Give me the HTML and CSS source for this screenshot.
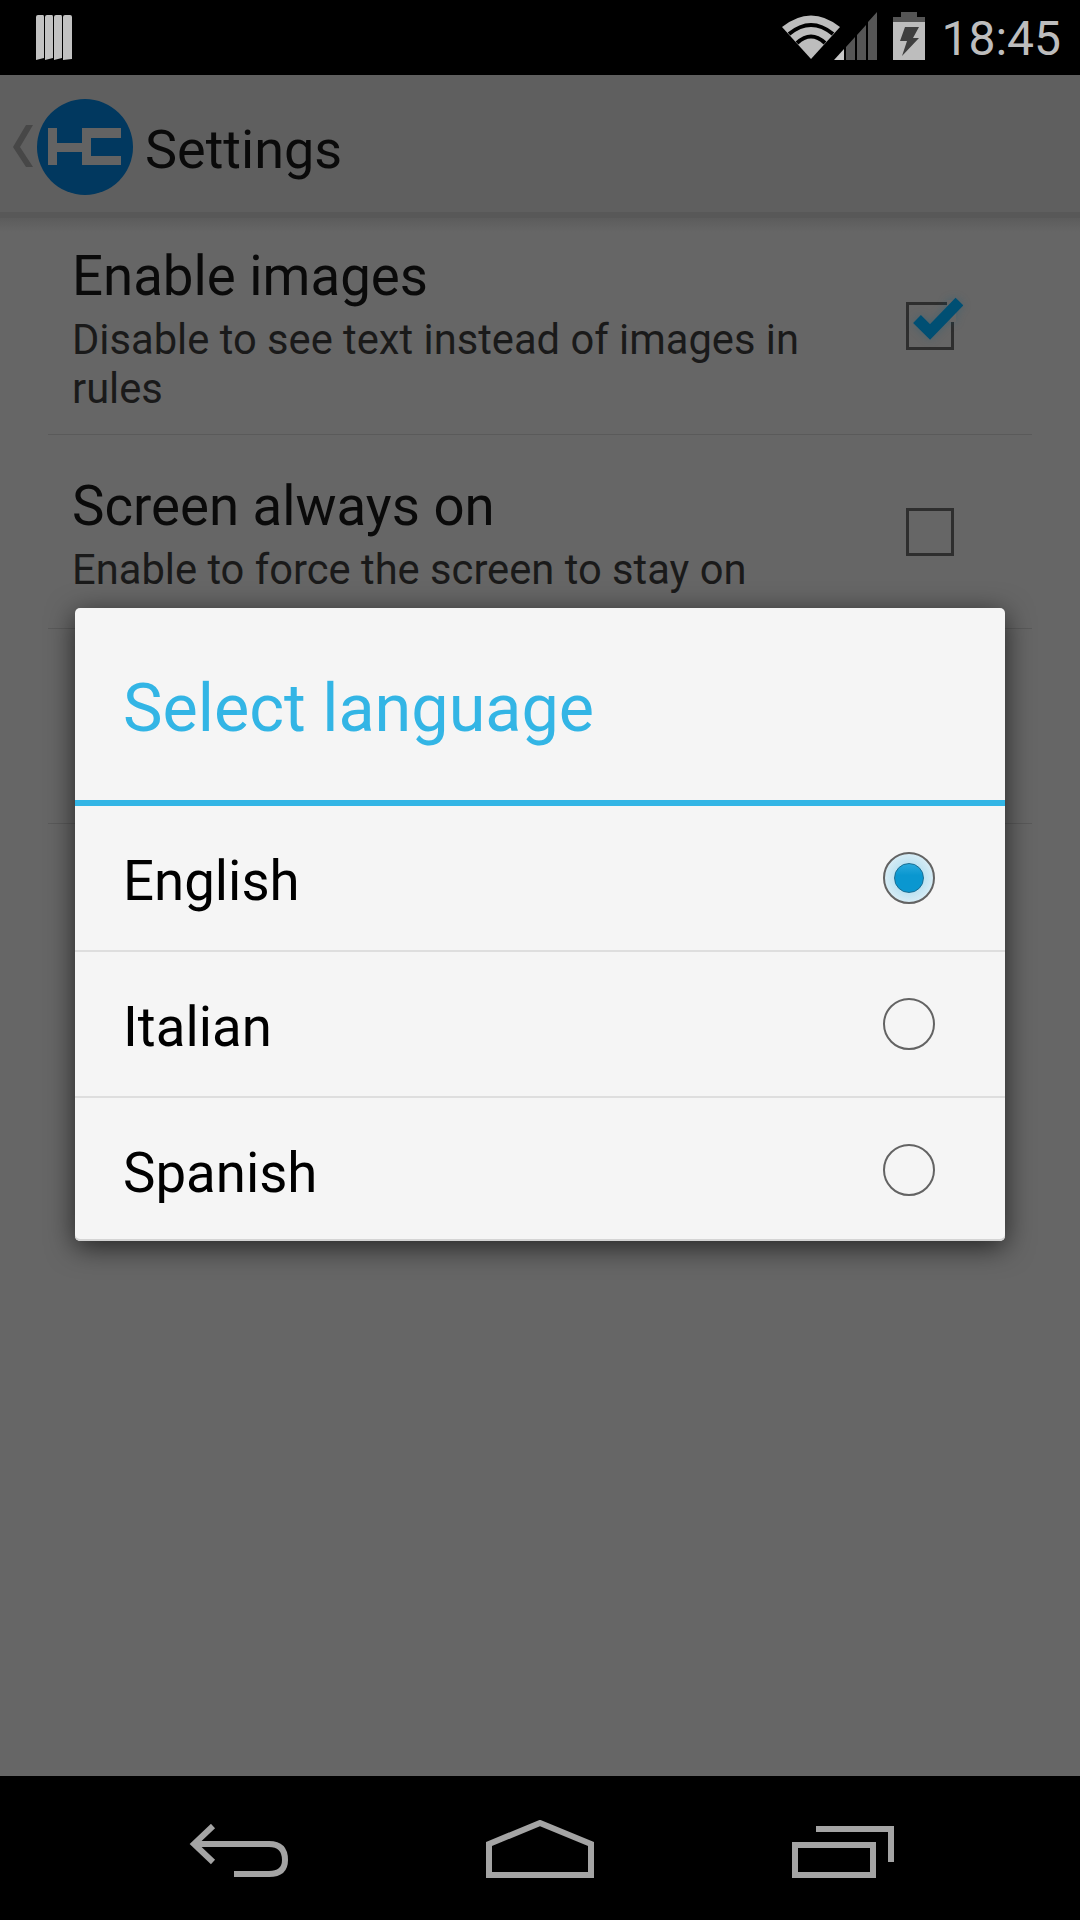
FILE: index.html
```html
<!DOCTYPE html>
<html lang="en">
<head>
  <meta charset="UTF-8">
  <title>Settings</title>
  <link rel="stylesheet" href="styles.css">
</head>
<body>

<div class="screen">
  <div class="status-bar">
    <svg class="notif-icon" width="36" height="46" viewBox="0 0 36 46">
      <path d="M0 2Q0 0 2 0H7Q8 0 8 2V43L0 45Z M9 2Q9 0 11 0H16Q17 0 17 2V43L9 45Z M18 2Q18 0 20 0H25Q26 0 26 2V43L18 45Z M27 2Q27 0 29 0H34Q36 0 36 2V44L27 45Z" fill="#c2c2c2"/>
    </svg>
    <div class="status-right">
      <svg class="wifi-icon" width="60" height="46" viewBox="0 0 60 46">
        <path d="M30 45L1 13Q30 -10 59 13Z" fill="#bdbdbd"/>
        <path d="M8 20Q30 2 52 20M16 29Q30 16 44 29" fill="none" stroke="#000" stroke-width="4"/>
      </svg>
      <svg class="signal-icon" width="43" height="48" viewBox="0 0 43 48">
        <path d="M0 48L10 37V48Z" fill="#c8c8c8"/>
        <path d="M12 35L21 25V48H12Z M23 23L32 13V48H23Z M34 10L43 0V48H34Z" fill="#565656"/>
      </svg>
      <svg class="battery-icon" width="32" height="48" viewBox="0 0 32 48">
        <path d="M8 0H24V5H32V11H0V5H8Z" fill="#555"/>
        <path d="M0 10H32V48H0Z" fill="#bdbdbd"/>
        <path d="M12 15H26L20 26H26L9 44L14 29H7Z" fill="#3f3f3f"/>
      </svg>
      <span class="clock">18:45</span>
    </div>
  </div>

  <div class="action-bar">
    <svg class="up-icon" width="21" height="44" viewBox="0 0 21 44">
      <path d="M20 0L7 22L20 42H13L0 22L13 0Z" fill="#474747"/>
    </svg>
    <svg class="app-logo" width="96" height="96" viewBox="0 0 96 96">
      <circle cx="48" cy="48" r="48" fill="#01385f"/>
      <path d="M11 29H20V44H45V29H84V39H54V57H84V66H45V53H20V66H11Z" fill="#636363"/>
    </svg>
    <span class="app-title">Settings</span>
  </div>

  <div class="settings">
    <div class="pref-row pref-first">
      <div class="pref-text">
        <div class="pref-title">Enable images</div>
        <div class="pref-sub">Disable to see text instead of images in rules</div>
      </div>
      <div class="checkbox">
        <svg class="check-mark" width="54" height="50" viewBox="0 0 54 50">
          <path d="M38 10H47V32H41V16H38Z" fill="#666"/>
          <path d="M8 29L21 42L50.5 11.5" fill="none" stroke="#004f73" stroke-width="11"/>
        </svg>
      </div>
    </div>
    <div class="pref-row pref-second">
      <div class="pref-text">
        <div class="pref-title">Screen always on</div>
        <div class="pref-sub">Enable to force the screen to stay on</div>
      </div>
      <div class="checkbox"></div>
    </div>
    <div class="pref-row pref-hidden"></div>
  </div>

  <div class="nav-bar">
    <svg width="100" height="54" viewBox="0 0 100 54">
      <path d="M24 2L5 20L24 38M5 20H80Q96 20 96 36Q96 50 80 50H45" fill="none" stroke="#a4a4a4" stroke-width="6"/>
    </svg>
    <svg width="108" height="58" viewBox="0 0 108 58">
      <path d="M3 24L54 3L105 24V55H3Z" fill="none" stroke="#a4a4a4" stroke-width="6"/>
    </svg>
    <svg class="nav-recents" width="102" height="52" viewBox="0 0 102 52">
      <path d="M3 19H81V49H3Z" fill="none" stroke="#a4a4a4" stroke-width="6"/>
      <path d="M24 3H99V36" fill="none" stroke="#a4a4a4" stroke-width="6"/>
    </svg>
  </div>

  <div class="dialog">
    <div class="dialog-title">Select language</div>
    <div class="lang-row">
      <span class="lang-name">English</span>
      <div class="radio radio-on"><div class="radio-dot"></div></div>
    </div>
    <div class="lang-row">
      <span class="lang-name">Italian</span>
      <div class="radio"></div>
    </div>
    <div class="lang-row">
      <span class="lang-name">Spanish</span>
      <div class="radio"></div>
    </div>
  </div>
</div>

</body>
</html>
```

FILE: styles.css
```css
* { box-sizing: border-box; }
body { margin: 0; font-family: Roboto, sans-serif; background: #666; }

.screen { position: relative; width: 1080px; height: 1920px; display: flex; flex-direction: column; overflow: hidden; background: #666; }

/* status bar */
.status-bar { height: 75px; background: #000; display: flex; justify-content: space-between; padding: 15px 19px 0 36px; }
.status-right { display: flex; align-items: flex-start; }
.wifi-icon { margin-top: -1px; margin-right: -7px; }
.signal-icon { margin-top: -3px; margin-right: 16px; }
.battery-icon { margin-top: -3px; margin-right: 16px; }
.clock { color: #bdbdbd; font-size: 48px; line-height: 48px; }

/* action bar */
.action-bar { height: 143px; background: #5f5f5f; display: flex; align-items: center; padding: 7px 0 0 13px; border-bottom: 6px solid #585858; }
.app-logo { margin-left: 3px; }
.app-title { color: #0a0a0a; font-size: 54px; margin-left: 12px; margin-top: 4px; }

/* settings list */
.settings { flex: 1; padding: 0 48px; background: linear-gradient(#5c5c5c, #666 14px) no-repeat; background-size: 100% 20px; }
.pref-row { display: flex; justify-content: space-between; align-items: center; padding: 0 78px 0 24px; border-bottom: 1px solid #5a5a5a; }
.pref-first { height: 217px; }
.pref-second { height: 194px; }
.pref-hidden { height: 195px; }
.pref-text { width: 760px; margin-top: 5px; }
.pref-title { color: #0a0a0a; font-size: 54.6px; line-height: 64px; }
.pref-sub { color: #1a1a1a; font-size: 41.7px; line-height: 49px; margin-top: 7px; }

.checkbox { position: relative; width: 48px; height: 48px; border: 3px solid #2e2e2e; flex-shrink: 0; }
.check-mark { position: absolute; left: 0; top: -15px; filter: drop-shadow(0 0 4px rgba(0,90,130,0.3)); }

/* language dialog */
.dialog { position: absolute; left: 75px; top: 608px; width: 930px; height: 633px; background: #f5f5f5; border-radius: 5px; box-shadow: inset 0 -2px 0 #d4d4d4, 0 6px 28px rgba(0,0,0,0.65); }
.dialog-title { height: 198px; padding: 0 48px; border-bottom: 6px solid #33b5e5; color: #33b5e5; font-size: 66.5px; line-height: 200px; }
.lang-row { height: 146px; display: flex; justify-content: space-between; align-items: center; padding: 0 70px 0 48px; border-bottom: 2px solid #dedede; color: #000; font-size: 54.6px; }
.lang-row:last-child { height: 143px; padding-top: 2px; border-bottom: none; }
.lang-name { margin-top: 5px; }
.radio { width: 52px; height: 52px; border: 2px solid #636363; border-radius: 50%; display: flex; align-items: center; justify-content: center; background: #f5f5f5; margin-top: -1px; }
.radio-on { background: radial-gradient(circle, #bfe3f2 45%, #f0f6f9 100%); }
.radio-dot { width: 30px; height: 30px; border-radius: 50%; background: linear-gradient(#2aa9dc, #0a97d0 40%); border: 1px solid #1a6d92; }

/* nav bar */
.nav-bar { height: 144px; background: #000; display: flex; align-items: flex-end; padding: 0 0 42px 189px; gap: 197px; }
.nav-recents { margin-left: 1px; }
```
